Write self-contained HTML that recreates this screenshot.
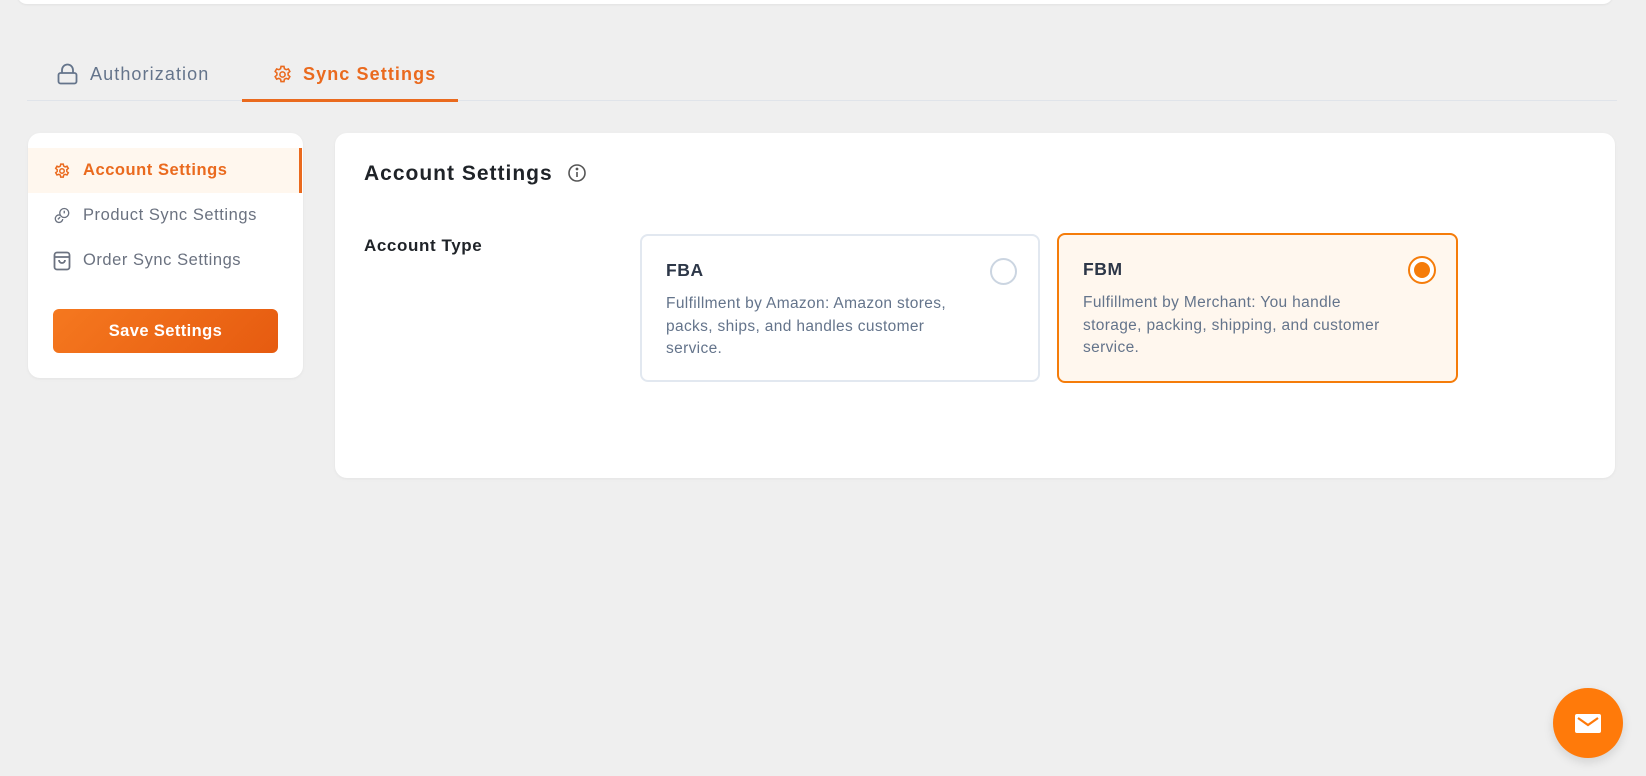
<!DOCTYPE html>
<html><head><meta charset="utf-8"><style>
*{box-sizing:border-box;margin:0;padding:0}
body{width:1646px;height:776px;background:#efefef;font-family:"Liberation Sans",sans-serif;position:relative;overflow:hidden}
.abs{position:absolute}
.topbar{left:17px;top:-10px;width:1596px;height:14px;background:#fff;border-radius:0 0 10px 10px;box-shadow:0 1px 2px rgba(0,0,0,.06)}
.tab{font-size:18px;display:flex;align-items:center;gap:10px;top:61px;height:26px;letter-spacing:1.1px}
.card{background:#fff;border-radius:12px;box-shadow:0 1px 3px rgba(0,0,0,.05)}
.item{left:28px;width:274px;height:45px;display:flex;align-items:center;padding-left:25px;gap:12px;font-size:16.5px;color:#6b7280;letter-spacing:.55px}
.opt{border-radius:8px}
.opt h3{position:absolute;left:24px;top:24px;font-size:17.5px;color:#2d3748;letter-spacing:.6px}
.opt p{position:absolute;left:24px;top:57px;width:360px;font-size:15.5px;line-height:22.5px;color:#64748b;letter-spacing:.35px}
</style></head><body>
<div class="abs topbar"></div>
<div class="abs" style="left:27px;top:100px;width:1590px;height:1px;background:#e0e4ea"></div>
<div class="abs tab" style="left:57px;color:#64748b">
<svg width="21" height="22" viewBox="0 0 21 22" fill="none" stroke="#64748b" stroke-width="1.8"><rect x="1.5" y="10" width="18" height="10.5" rx="2"/><path d="M5 10V7a5.5 5.5 0 0 1 11 0v3"/></svg>
<span style="margin-left:2px">Authorization</span></div>
<div class="abs tab" style="left:272px;color:#ea6a1e;font-weight:bold">
<svg width="21" height="21" viewBox="0 0 24 24" fill="none" stroke="#ea6a1e" stroke-width="1.8"><path d="M10.3 2.8h3.4l.5 2.6 2 1.1 2.5-.9 1.7 2.9-2 1.8v2.3l2 1.8-1.7 2.9-2.5-.9-2 1.1-.5 2.6h-3.4l-.5-2.6-2-1.1-2.5.9-1.7-2.9 2-1.8v-2.3l-2-1.8 1.7-2.9 2.5.9 2-1.1z"/><circle cx="12" cy="12" r="3"/></svg>
<span>Sync Settings</span></div>
<div class="abs" style="left:242px;top:99px;width:216px;height:3px;background:#ea6a1e"></div>

<div class="abs card" style="left:28px;top:133px;width:275px;height:245px"></div>
<div class="abs item" style="top:148px;background:#fff7ee;color:#ea6a1e;font-weight:bold;border-right:3px solid #ea6a1e">
<svg width="18" height="18" viewBox="0 0 24 24" fill="none" stroke="#ea6a1e" stroke-width="2"><path d="M10.3 2.8h3.4l.5 2.6 2 1.1 2.5-.9 1.7 2.9-2 1.8v2.3l2 1.8-1.7 2.9-2.5-.9-2 1.1-.5 2.6h-3.4l-.5-2.6-2-1.1-2.5.9-1.7-2.9 2-1.8v-2.3l-2-1.8 1.7-2.9 2.5.9 2-1.1z"/><circle cx="12" cy="12" r="3"/></svg>
Account Settings</div>
<div class="abs item" style="top:193px">
<svg width="18" height="18" viewBox="0 0 24 24" fill="none" stroke="#6b7280" stroke-width="1.8"><circle cx="15" cy="8" r="6"/><path d="M15 5v3.5"/><path d="M10 11a5 5 0 1 0 3 5"/><path d="M6.5 16.5l3-3"/></svg>
Product Sync Settings</div>
<div class="abs item" style="top:238px">
<svg width="18" height="20" viewBox="0 0 18 20" fill="none" stroke="#6b7280" stroke-width="1.8"><rect x="1.5" y="1.5" width="15" height="17" rx="2.5"/><path d="M1.5 6h15M6 9a3 3 0 0 0 6 0"/></svg>
Order Sync Settings</div>
<div class="abs" style="left:53px;top:309px;width:225px;height:44px;border-radius:6px;background:linear-gradient(135deg,#f5781f,#e65b10);color:#fff;font-weight:bold;font-size:16.5px;letter-spacing:.4px;display:flex;align-items:center;justify-content:center">Save Settings</div>

<div class="abs card" style="left:335px;top:133px;width:1280px;height:345px"></div>
<div class="abs" style="left:364px;top:162px;font-size:21px;font-weight:bold;color:#1f2328;letter-spacing:1px">Account Settings</div>
<svg class="abs" style="left:567px;top:163px" width="20" height="20" viewBox="0 0 20 20" fill="none" stroke="#555" stroke-width="1.6"><circle cx="10" cy="10" r="8"/><path d="M10 9v5"/><circle cx="10" cy="6" r=".6" fill="#555"/></svg>
<div class="abs" style="left:364px;top:236px;font-size:17px;font-weight:bold;color:#1f2328;letter-spacing:.6px">Account Type</div>

<div class="abs opt" style="left:640px;top:234px;width:400px;height:148px;border:2px solid #e2e8f0;background:#fff">
<h3>FBA</h3><p>Fulfillment by Amazon: Amazon stores,<br>packs, ships, and handles customer<br>service.</p>
<div class="abs" style="left:348px;top:22px;width:27px;height:27px;border-radius:50%;border:2px solid #cbd5e1"></div></div>
<div class="abs opt" style="left:1057px;top:233px;width:401px;height:150px;border:2.5px solid #f57c0a;background:#fff7ee">
<h3>FBM</h3><p>Fulfillment by Merchant: You handle<br>storage, packing, shipping, and customer<br>service.</p>
<div class="abs" style="left:349px;top:21px;width:28px;height:28px;border-radius:50%;border:2.5px solid #f57c0a;background:#fff;display:flex;align-items:center;justify-content:center"><div style="width:16px;height:16px;border-radius:50%;background:#f57c0a"></div></div></div>

<div class="abs" style="left:1553px;top:688px;width:70px;height:70px;border-radius:50%;background:#ff7a0a;box-shadow:0 4px 10px rgba(0,0,0,.12);display:flex;align-items:center;justify-content:center">
<svg width="26" height="19" viewBox="0 0 26 19"><rect width="26" height="19" rx="2" fill="#fff"/><path d="M3 4l10 7 10-7" fill="none" stroke="#ff7a0a" stroke-width="2.2"/></svg></div>
</body></html>
